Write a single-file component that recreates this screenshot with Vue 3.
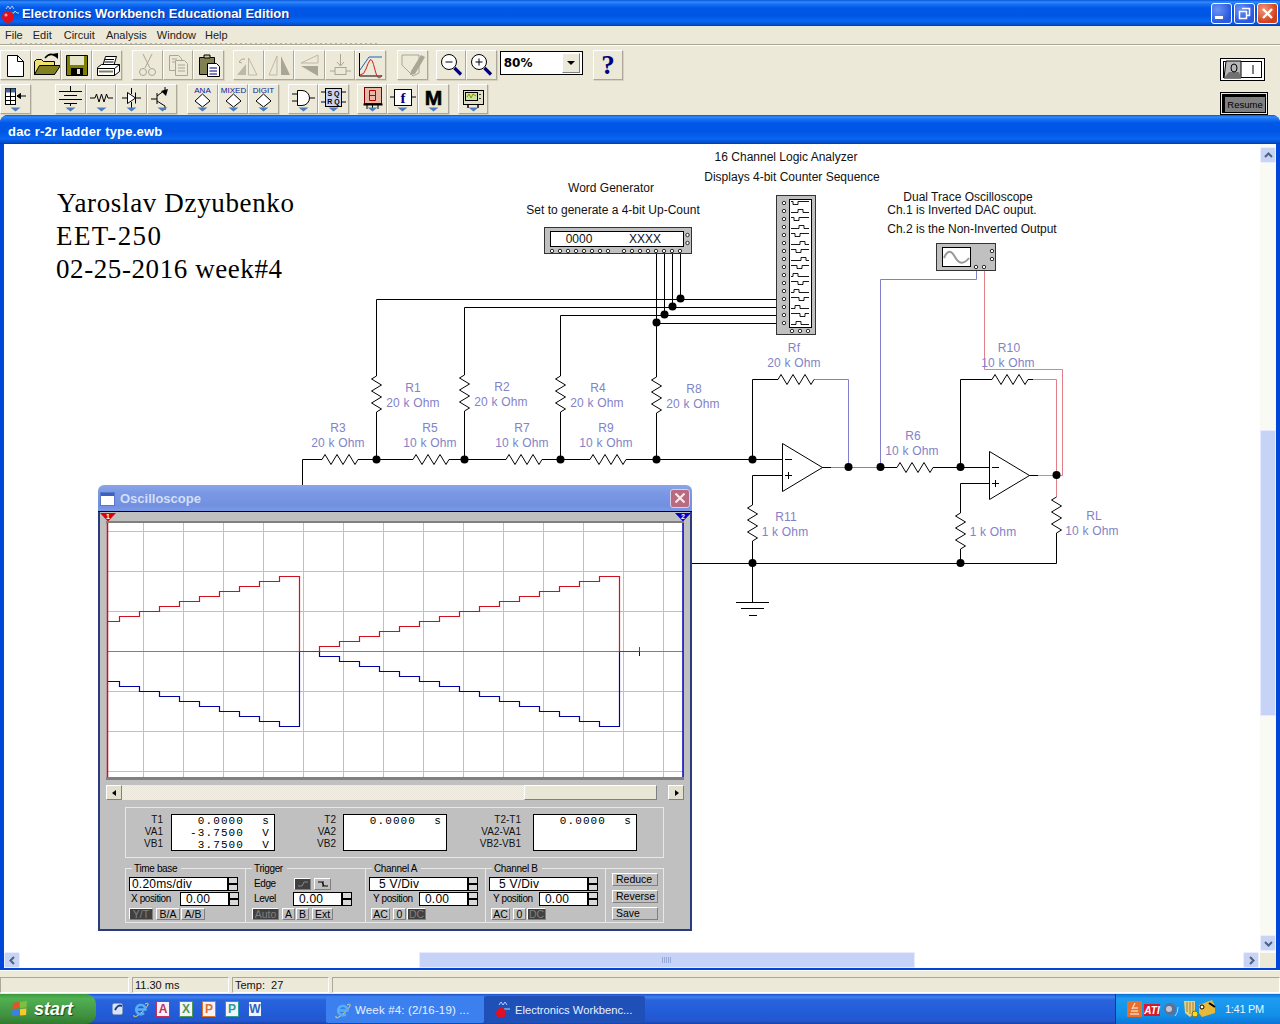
<script setup>
const zig = (x0, y, v = false, n = 36) => {
  const p = [[0, 0], [3, -5], [9, 5], [15, -5], [21, 5], [27, -5], [33, 5], [36, 0]]
  return p.map(([a, b]) => (v ? `${y + b},${x0 + (a * n) / 36}` : `${x0 + (a * n) / 36},${y + b}`)).join(' ')
}
const black = [
  '302.5,486 302.5,459.5 322,459.5', '358,459.5 413,459.5', '449,459.5 506,459.5', '542,459.5 590,459.5', '626,459.5 782,459.5',
  '376.5,376 376.5,299.5 776,299.5', '376.5,412 376.5,459.5', '464.5,375 464.5,307.5 776,307.5', '464.5,411 464.5,459.5',
  '560.5,376 560.5,315.5 776,315.5', '560.5,412 560.5,459.5', '656.5,253 656.5,377', '656.5,413 656.5,459.5', '656.5,323.5 776,323.5',
  '664.5,253 664.5,315', '672.5,253 672.5,307', '680.5,253 680.5,299',
  '752.5,459.5 752.5,379.5 778,379.5', '782,475.5 752.5,475.5 752.5,505', '752.5,541 752.5,602', '822,467.5 831,467.5',
  '880,467.5 897,467.5', '933,467.5 989,467.5', '960.5,467.5 960.5,379.5 992,379.5', '1028,379.5 1033,379.5', '989,483.5 960.5,483.5 960.5,513', '960.5,549 960.5,563.5',
  '1029,475.5 1038,475.5', '692,563.5 1056.5,563.5 1056.5,533', '736,602.5 769,602.5', '741,608.5 764,608.5', '749,615.5 757,615.5',
]
const blue = ['814,379.5 848.5,379.5 848.5,467.5', '831,467.5 880,467.5', '880.5,467.5 880.5,279.5 976.5,279.5 976.5,270']
const red = ['984.5,270 984.5,369.5 1062.5,369.5 1062.5,475.5 1056.5,475.5', '1033,379.5 1056.5,379.5 1056.5,497', '1038,475.5 1056.5,475.5']
const resH = [[322, 459.5], [413, 459.5], [506, 459.5], [590, 459.5], [778, 379.5], [897, 467.5], [992, 379.5]]
const resV = [[376, 376.5], [375, 464.5], [376, 560.5], [377, 656.5], [505, 752.5], [513, 960.5], [497, 1056.5]]
const dots = [[376.5, 459.5], [464.5, 459.5], [560.5, 459.5], [656.5, 459.5], [752.5, 459.5], [680.5, 298.5], [672.5, 306.5], [664.5, 314.5], [656.5, 322.5],
  [848.5, 467], [880.5, 467], [960.5, 467], [1056.5, 475], [752.5, 563], [960.5, 563]]
const purple = [
  ['R1', 413, 392], ['20 k Ohm', 413, 407], ['R2', 502, 391], ['20 k Ohm', 501, 406], ['R4', 598, 392], ['20 k Ohm', 597, 407], ['R8', 694, 393], ['20 k Ohm', 693, 408],
  ['R3', 338, 432], ['20 k Ohm', 338, 447], ['R5', 430, 432], ['10 k Ohm', 430, 447], ['R7', 522, 432], ['10 k Ohm', 522, 447], ['R9', 606, 432], ['10 k Ohm', 606, 447],
  ['Rf', 794, 352], ['20 k Ohm', 794, 367], ['R10', 1009, 352], ['10 k Ohm', 1008, 367], ['R6', 913, 440], ['10 k Ohm', 912, 455],
  ['R11', 786, 521], ['1 k Ohm', 785, 536], ['1 k Ohm', 993, 536], ['RL', 1094, 520], ['10 k Ohm', 1092, 535],
]
const notes = [
  ['16 Channel Logic Analyzer', 786, 161], ['Displays 4-bit Counter Sequence', 792, 181], ['Word Generator', 611, 192], ['Set to generate a 4-bit Up-Count', 613, 214],
  ['Dual Trace Oscilloscope', 968, 201], ['Ch.1 is Inverted DAC ouput.', 962, 214], ['Ch.2 is the Non-Inverted Output', 972, 233],
]
const wgPins = [552, 560, 568, 576, 584, 592, 600, 608, 624, 632, 640, 648, 656, 664, 672, 680]
const laPins = Array.from({ length: 16 }, (_, i) => 203 + i * 8)
const laWave = (y, i) => {
  const a = 793 + ((i * 5) % 9), b = a + 5
  return i % 2 ? `791,${y + 3} ${a},${y + 3} ${a},${y} ${b},${y} ${b},${y + 3} 809,${y + 3}` : `791,${y} ${a},${y} ${a},${y + 3} ${b},${y + 3} ${b},${y} 809,${y}`
}
const scopeX = Array.from({ length: 14 }, (_, i) => 143.5 + i * 40)
const scopeY = [531.5, 571.5, 611.5, 691.5, 731.5, 771.5]
const traces = (() => {
  let r = [[107, 621.5]], y = 621.5, x = 119.5
  for (let i = 0; i < 9; i++) { r.push([x, y]); y -= 5; r.push([x, y]); x += 20 }
  r.push([299.5, y], [299.5, 651.5], [319.5, 651.5])
  y = 651.5; x = 319.5
  for (let i = 0; i < 15; i++) { r.push([x, y]); y -= 5; r.push([x, y]); x += 20 }
  r.push([619.5, y], [619.5, 651.5], [639.5, 651.5])
  return r
})()
const redTrace = traces.map((p) => p.join(',')).join(' ')
const blueTrace = traces.map(([a, b]) => `${a},${1303 - b}`).join(' ')
const row1 = [
  ['new', 'open', 'save', 'print'], ['cut', 'copy', 'paste'], ['rot', 'fliph', 'flipv', 'prop', 'graph'], ['check'], ['zout', 'zin'],
]
const row2 = [['table'], ['batt', 'res', 'diode', 'bjt'], ['ana', 'mixed', 'digit'], ['gate', 'sr'], ['seg', 'func', 'misc'], ['inst']]
const menu = ['File', 'Edit', 'Circuit', 'Analysis', 'Window', 'Help']
const quick = [['A', '#c42f62'], ['X', '#4f9a52'], ['P', '#e0702c'], ['P', '#2f9c9c'], ['W', '#2f62c0']]
const sections = [
  { title: 'Time base', sel: '0.20ms/div', selW: 99, lbl: 'X position', lblW: 51, val: '0.00', pad: 0, btns: [['Y/T', 24, 1], ['B/A', 24, 0], ['A/B', 24, 0]] },
  { title: 'Trigger', edge: true, lbl: 'Level', lblW: 44, val: '0.00', pad: 3, btns: [['Auto', 27, 1], ['A', 13, 0], ['B', 13, 0], ['Ext', 21, 0]] },
  { title: 'Channel A', sel: '  5 V/Div', selW: 99, lbl: 'Y position', lblW: 50, val: '0.00', pad: 2, btns: [['AC', 19, 0], ['0', 13, 0], ['DC', 19, 1]] },
  { title: 'Channel B', sel: '  5 V/Div', selW: 99, lbl: 'Y position', lblW: 50, val: '0.00', pad: 2, btns: [['AC', 19, 0], ['0', 13, 0], ['DC', 19, 1]] },
]
const reads = [
  { w: 37, gap: 8, labels: ['T1', 'VA1', 'VB1'], lines: [['0.0000', 's'], ['-3.7500', 'V'], ['3.7500', 'V']] },
  { w: 61, gap: 7, labels: ['T2', 'VA2', 'VB2'], lines: [['0.0000', 's']] },
  { w: 74, gap: 12, labels: ['T2-T1', 'VA2-VA1', 'VB2-VB1'], lines: [['0.0000', 's']] },
]
</script>

<template>
  <div class="root">
    <svg class="defs">
      <symbol id="new" viewBox="0 0 31 30"><path d="M7.5 5.5H17.5L23.5 11.5V26.5H7.5Z" fill="#fff" stroke="#000"/><path d="M17.5 5.5V11.5H23.5" fill="none" stroke="#000"/></symbol>
      <symbol id="open" viewBox="0 0 31 30"><path d="M3.5 24.5V11.5L5.5 9.5H10.5L12.5 11.5H23.5V24.5Z" fill="#f0e070" stroke="#000"/><path d="M3.5 24.5L8.5 15.5H29.5L23.5 24.5Z" fill="#808020" stroke="#000"/><path d="M14 8Q19 2 24 6" fill="none" stroke="#000" stroke-width="1.5"/><path d="M27 9L27 3L21 4Z" fill="#000"/></symbol>
      <symbol id="save" viewBox="0 0 31 30"><path d="M5.5 5.5H26.5V25.5H5.5Z" fill="#808000" stroke="#000"/><rect x="9" y="6" width="14" height="9" fill="#e4e4c8"/><rect x="10" y="18" width="12" height="7" fill="#000"/><rect x="16" y="19" width="3" height="5" fill="#e4e4c8"/></symbol>
      <symbol id="print" viewBox="0 0 31 30"><path d="M10.5 16.5L13.5 6.5H24.5L21.5 16.5Z" fill="#fff" stroke="#000"/><path d="M13 9.5H22M12.5 12H21.5M12 14.5H21" stroke="#000"/><path d="M5.5 17.5L9.5 14.5H27.5V21.5L22.5 25.5H5.5Z" fill="#fff" stroke="#000"/><path d="M5.5 18.5H22.5L27.5 14.5M22.5 18.5V25.5" fill="none" stroke="#000"/><path d="M7 21.5H21" stroke="#808060" stroke-width="2"/></symbol>
      <symbol id="cut" viewBox="0 0 31 30"><g fill="none" stroke="#a9a694"><path d="M11 4L18 18M20 4L13 18"/><circle cx="11" cy="22" r="3.5"/><circle cx="20" cy="22" r="3.5"/></g></symbol>
      <symbol id="copy" viewBox="0 0 31 30"><g fill="#ece9d8" stroke="#a9a694"><path d="M6.5 5.5H15.5L18.5 8.5V20.5H6.5Z"/><path d="M12.5 10.5H21.5L24.5 13.5V25.5H12.5Z"/><path d="M15 15H22M15 18H22M15 21H22M9 9H14M9 12H12"/></g></symbol>
      <symbol id="paste" viewBox="0 0 31 30"><path d="M6.5 7.5H21.5V24.5H6.5Z" fill="#808050" stroke="#000"/><path d="M11 8V5H17V8Z" fill="#c8c8a8" stroke="#000"/><path d="M14.5 13.5H23.5L26.5 16.5V26.5H14.5Z" fill="#fff" stroke="#000"/><path d="M16.5 18H24M16.5 21H24M16.5 24H24" stroke="#000080"/></symbol>
      <symbol id="rot" viewBox="0 0 31 30"><path d="M4 25L13 14V25Z" fill="#bcb9a8"/><path d="M15.5 8V25H24Z" fill="none" stroke="#bcb9a8"/><path d="M6 12Q8 8 12 9M6 12L9 13" fill="none" stroke="#a9a694"/></symbol>
      <symbol id="fliph" viewBox="0 0 31 30"><path d="M13 6L5 25H13Z" fill="none" stroke="#bcb9a8"/><path d="M17 6L26 25H17Z" fill="#a9a694"/></symbol>
      <symbol id="flipv" viewBox="0 0 31 30"><path d="M24 5L7 13H24Z" fill="none" stroke="#bcb9a8"/><path d="M24 26L7 16H24Z" fill="#a9a694"/></symbol>
      <symbol id="prop" viewBox="0 0 31 30"><g fill="none" stroke="#a9a694"><path d="M15.5 4V16M12 12L15.5 16L19 12M5 21H10M21 21H26"/><rect x="10" y="17.5" width="11" height="7"/></g></symbol>
      <symbol id="graph" viewBox="0 0 31 30"><path d="M4.5 3V26H27" fill="none" stroke="#000"/><path d="M5 20L14 7H27" fill="none" stroke="#2060c0"/><path d="M5 25Q9 25 11 19T15 10T20 20T27 25" fill="none" stroke="#d02020"/></symbol>
      <symbol id="check" viewBox="0 0 31 30"><path d="M5 5H22V23L16 26L5 15Z" fill="none" stroke="#a9a694"/><path d="M14 21L24 5L28 7L18 24L13 25Z" fill="#a9a694"/></symbol>
      <symbol id="zout" viewBox="0 0 31 30"><circle cx="13" cy="12" r="7.5" fill="#fff" stroke="#000"/><path d="M9.5 12H16.5" stroke="#000"/><path d="M18.5 18L25 24.5" stroke="#000080" stroke-width="3.2"/></symbol>
      <symbol id="zin" viewBox="0 0 31 30"><circle cx="13" cy="12" r="7.5" fill="#fff" stroke="#000"/><path d="M9.5 12H16.5M13 8.5V15.5" stroke="#000"/><path d="M18.5 18L25 24.5" stroke="#000080" stroke-width="3.2"/></symbol>
      <symbol id="table" viewBox="0 0 31 30"><rect x="5.5" y="4.5" width="10" height="16" fill="#fff" stroke="#000"/><path d="M5.5 4.5H15.5V8.5H5.5Z" fill="#4060a0"/><path d="M5.5 12.5H15.5M5.5 16.5H15.5M10.5 4.5V20.5" stroke="#000"/><path d="M17 12H26M17 12L20.5 9.5V14.5Z" stroke="#000" fill="#000"/></symbol>
      <symbol id="batt" viewBox="0 0 31 30"><path d="M15.5 2V7M4 7.5H27M9 11.5H22M4 15.5H27M9 19.5H22M15.5 20V22" stroke="#000" fill="none"/></symbol>
      <symbol id="res" viewBox="0 0 31 30"><path d="M4 14H9L10.5 10L13 18L15.5 10L18 18L20.5 10L22 14H27" fill="none" stroke="#000"/></symbol>
      <symbol id="diode" viewBox="0 0 31 30"><path d="M15.5 4V10M15.5 18V24M6 14H12M19 14H25" stroke="#000" fill="none"/><path d="M11.5 8.5V19.5L19.5 14ZM19.5 8.5V19.5" fill="#fff" stroke="#000"/></symbol>
      <symbol id="bjt" viewBox="0 0 31 30"><path d="M10 9V20M4 15H10M10 12L18 6V3M10 17L18 22V26" fill="none" stroke="#000"/><path d="M21 5L14 7L19 12Z" fill="#000"/></symbol>
      <symbol id="ana" viewBox="0 0 31 30"><text x="15.5" y="8.5" class="mini">ANA</text><path d="M15.5 10L23 17L15.5 23L8 17Z" fill="#fff" stroke="#000"/></symbol>
      <symbol id="mixed" viewBox="0 0 31 30"><text x="15.5" y="8.5" class="mini">MIXED</text><path d="M15.5 10L23 17L15.5 23L8 17Z" fill="#fff" stroke="#000"/></symbol>
      <symbol id="digit" viewBox="0 0 31 30"><text x="15.5" y="8.5" class="mini">DIGIT</text><path d="M15.5 10L23 17L15.5 23L8 17Z" fill="#fff" stroke="#000"/></symbol>
      <symbol id="gate" viewBox="0 0 31 30"><path d="M4 10H9M4 17H9M21 14H27" stroke="#000"/><path d="M9.5 6.5H14A7.5 7.5 0 0 1 14 21.5H9.5Z" fill="#fff" stroke="#000"/></symbol>
      <symbol id="sr" viewBox="0 0 31 30"><rect x="7.5" y="4.5" width="16" height="18" fill="#c8d4f0" stroke="#000"/><text x="15.5" y="12" class="sq">S Q</text><text x="15.5" y="20" class="sq">R Q</text><path d="M3 8H7M3 18H7M24 8H28M24 18H28" stroke="#000"/></symbol>
      <symbol id="seg" viewBox="0 0 31 30"><rect x="7.5" y="3.5" width="17" height="16" fill="#e8b8a8" stroke="#800000"/><rect x="6.5" y="19.5" width="19" height="2" fill="#000"/><path d="M12.5 6.5H18.5V16.5H12.5ZM12.5 11.5H18.5" fill="none" stroke="#b00000"/><path d="M10 21V25M15.5 21V25M21 21V25" stroke="#000"/></symbol>
      <symbol id="func" viewBox="0 0 31 30"><rect x="7.5" y="5.5" width="17" height="16" fill="#fff" stroke="#000"/><path d="M3 13H7M25 13H29" stroke="#000"/><text x="16" y="19" class="ff">f</text></symbol>
      <symbol id="misc" viewBox="0 0 31 30"><text x="15.5" y="21" class="mm">M</text></symbol>
      <symbol id="inst" viewBox="0 0 31 30"><rect x="5.5" y="6.5" width="20" height="14" fill="#e0e0c8" stroke="#000"/><rect x="7.5" y="8.5" width="12" height="8" fill="#c8e8a0" stroke="#000"/><path d="M9 13L11 10L13 14L15 10L18 12" fill="none" stroke="#a08000"/><path d="M22 10V11M22 14V15M10 20V24M20 20V24" stroke="#000" stroke-width="1.5"/></symbol>
      <symbol id="ielogo" viewBox="0 0 18 18"><path d="M2 15Q1 18 5 16Q13 11 16 5Q17 2 13 4" fill="none" stroke="#e8d070"/><path d="M4.5 9.5H13.5A4.7 4.7 0 1 0 12 13" fill="none" stroke="#58b0f4" stroke-width="2.4"/></symbol>
    </svg>

    <header class="xp-title main-title">
      <svg class="app-ico" width="18" height="20" viewBox="0 0 18 20"><path d="M5 5L7 2L9 5L11 2L13 5" fill="none" stroke="#b8c8ff"/><path d="M10 9H13L14 7L16 9H18" fill="none" stroke="#9fe0ff"/><circle cx="7" cy="13" r="6" fill="#e01020"/><circle cx="5" cy="11" r="1.5" fill="#ff9a9a"/></svg>
      <span class="mt-text">Electronics Workbench Educational Edition</span>
      <div class="wbtns">
        <span class="wb blue"><i class="min-i"></i></span>
        <span class="wb blue"><svg width="13" height="13" viewBox="0 0 13 13"><path d="M4 1.5H11.5V8.5H9M1.5 4.5H8.5V11.5H1.5Z" fill="none" stroke="#fff" stroke-width="1.5"/></svg></span>
        <span class="wb redb"><svg width="13" height="13" viewBox="0 0 13 13"><path d="M2 2L11 11M11 2L2 11" stroke="#fff" stroke-width="2.4"/></svg></span>
      </div>
    </header>

    <nav class="menubar"><span v-for="m in menu" :key="m">{{ m }}</span></nav>

    <section class="toolbars">
      <div class="tbcols">
        <div class="tbrow r1">
          <div v-for="(g, i) in row1" :key="i" class="tbgroup">
            <button v-for="b in g" :key="b" class="tb"><svg width="31" height="30"><use :href="'#' + b" /></svg></button>
          </div>
          <div class="combo"><span class="combo-v">80%</span><span class="combo-a"><i></i></span></div>
          <button class="tb help">?</button>
        </div>
        <div class="tbrow r2">
          <div v-for="(g, i) in row2" :key="i" class="tbgroup">
            <button v-for="b in g" :key="b" class="tb">
              <svg width="31" height="30"><use :href="'#' + b" /><path d="M10.5 23.5H20.5L15.5 27.5Z" fill="#4a7cc4" /></svg>
            </button>
          </div>
        </div>
      </div>
      <div class="rightctl">
        <div class="power">
          <svg width="45" height="23" viewBox="0 0 45 23"><rect x=".5" y=".5" width="44" height="22" fill="#fff" stroke="#000"/><rect x="3.5" y="3.5" width="38" height="16" fill="#fff" stroke="#000"/><path d="M4 20L6 3H21V20Z" fill="#b8b8b8" stroke="#000"/><path d="M4 20L9 14H19L21 20Z" fill="#707070"/><ellipse cx="14" cy="10" rx="3" ry="4" fill="none" stroke="#000"/><path d="M33 7V16" stroke="#000"/></svg>
        </div>
        <div class="resume"><span>Resume</span></div>
      </div>
    </section>

    <section class="mdi">
      <div class="xp-title mdi-title">dac r-2r ladder type.ewb</div>
      <div class="mdi-body">
        <div class="canvas-col">
          <div class="canvas">
            <svg width="1256" height="808" viewBox="4 144 1256 808" class="circuit">
              <text x="57" y="212" class="big" textLength="237">Yaroslav Dzyubenko</text>
              <text x="56" y="245" class="big" textLength="105">EET-250</text>
              <text x="56" y="278" class="big" textLength="226">02-25-2016 week#4</text>
              <text v-for="n in notes" :key="n[0]" :x="n[1]" :y="n[2]" class="note">{{ n[0] }}</text>

              <g class="wires">
                <polyline v-for="w in black" :key="w" :points="w" stroke="#000" />
                <polyline v-for="w in blue" :key="w" :points="w" stroke="#8080cc" />
                <polyline v-for="w in red" :key="w" :points="w" stroke="#e08088" />
              </g>
              <g fill="none" stroke="#000">
                <polyline v-for="r in resH" :key="r[0]" :points="zig(r[0], r[1])" />
                <polyline v-for="r in resV" :key="r[0]" :points="zig(r[0], r[1], true)" />
                <path d="M782.5 443.5V491.5L822.5 467.5ZM785 459.5H792M785 475.5H792M788.5 472V479" fill="#fff" />
                <path d="M989.5 451.5V499.5L1029.5 475.5ZM992 467.5H999M992 483.5H999M995.5 480V487" fill="#fff" />
              </g>
              <circle v-for="d in dots" :key="d.join()" :cx="d[0]" :cy="d[1]" r="4" fill="#000" />
              <text v-for="(t, i) in purple" :key="i" :x="t[1]" :y="t[2]" class="part">{{ t[0] }}</text>

              <g class="inst">
                <rect x="544.5" y="227.5" width="147" height="26" fill="#c0c0c0" stroke="#333" />
                <rect x="550.5" y="231.5" width="133" height="15" fill="#fff" stroke="#000" />
                <text x="579" y="243" class="note">0000</text>
                <text x="645" y="243" class="note">XXXX</text>
                <circle v-for="p in wgPins" :key="p" :cx="p" cy="251" r="1.7" fill="#fff" stroke="#000" stroke-width=".8" />
                <circle cx="687.5" cy="235" r="1.7" fill="#fff" stroke="#000" stroke-width=".8" />
                <circle cx="687.5" cy="243" r="1.7" fill="#fff" stroke="#000" stroke-width=".8" />

                <rect x="776.5" y="195.5" width="39" height="139" fill="#c0c0c0" stroke="#333" />
                <rect x="789.5" y="199.5" width="22" height="128" fill="#fff" stroke="#000" />
                <circle v-for="p in laPins" :key="p" cx="784" :cy="p" r="1.7" fill="#fff" stroke="#000" stroke-width=".8" />
                <polyline v-for="(p, i) in laPins" :key="'w' + p" :points="laWave(p - 1.5, i)" fill="none" stroke="#000" stroke-width=".9" />
                <circle v-for="p in [792, 800, 808]" :key="'b' + p" :cx="p" cy="331" r="1.7" fill="#fff" stroke="#000" stroke-width=".8" />

                <rect x="936.5" y="243.5" width="59" height="27" fill="#c0c0c0" stroke="#333" />
                <rect x="942.5" y="247.5" width="28" height="19" fill="#fff" stroke="#000" />
                <path d="M944 258Q949 246 955 257T969 258" fill="none" stroke="#999" stroke-width="2" />
                <circle v-for="c in [[976, 267], [984, 267], [992, 251], [992, 259]]" :key="c.join()" :cx="c[0]" :cy="c[1]" r="1.7" fill="#fff" stroke="#000" stroke-width=".8" />
              </g>
            </svg>
          </div>
          <div class="hscroll">
            <span class="sb"><svg width="9" height="9" viewBox="0 0 9 9"><path d="M6 1L2.5 4.5L6 8" fill="none" stroke="#4d6185" stroke-width="2"/></svg></span>
            <span class="hthumb"><i class="grip"></i></span>
            <span class="sb"><svg width="9" height="9" viewBox="0 0 9 9"><path d="M3 1L6.5 4.5L3 8" fill="none" stroke="#4d6185" stroke-width="2"/></svg></span>
          </div>
        </div>
        <div class="vscroll">
          <span class="sb up"><svg width="9" height="9" viewBox="0 0 9 9"><path d="M1 6L4.5 2.5L8 6" fill="none" stroke="#4d6185" stroke-width="2"/></svg></span>
          <span class="vthumb"></span>
          <span class="sb down"><svg width="9" height="9" viewBox="0 0 9 9"><path d="M1 3L4.5 6.5L8 3" fill="none" stroke="#4d6185" stroke-width="2"/></svg></span>
          <span class="corner"></span>
        </div>
      </div>
    </section>

    <footer class="status">
      <span class="cell c1"></span><span class="cell c2">11.30 ms</span><span class="cell c3">Temp:&nbsp; 27</span><span class="cell c4"></span>
    </footer>

    <footer class="taskbar">
      <div class="startbtn">
        <svg width="18" height="18" viewBox="0 0 18 18"><path d="M2 3L8 2V8L1.5 9Z" fill="#e8502a"/><path d="M9 2L16 1L15.5 7.5L9 8Z" fill="#7cc040"/><path d="M1.5 10L8 9V15L1 16Z" fill="#3a80e8"/><path d="M9 9L15.5 8.5L15 15L9 15.5Z" fill="#f8c828"/></svg>
        <span>start</span>
      </div>
      <div class="quick">
        <svg width="16" height="16" viewBox="0 0 16 16"><rect x="2" y="2" width="11" height="12" rx="2" fill="#d8e4f8" stroke="#3a5aa8"/><path d="M5 9Q8 3 12 5" fill="none" stroke="#203a88" stroke-width="2"/></svg>
        <svg width="18" height="18"><use href="#ielogo" /></svg>
        <span v-for="(q, i) in quick" :key="i" class="qi" :style="{ color: q[1], borderColor: q[1] }">{{ q[0] }}</span>
      </div>
      <div class="task t1"><svg width="18" height="18"><use href="#ielogo" /></svg><span>Week #4: (2/16-19) ...</span></div>
      <div class="task t2"><svg width="18" height="18" viewBox="0 0 18 18"><path d="M5 4L7 1L9 4L11 1L13 4" fill="none" stroke="#b8c8ff"/><path d="M10 8H16" stroke="#9fe0ff"/><circle cx="7" cy="12" r="5" fill="#e01020"/></svg><span>Electronics Workbenc...</span></div>
      <div class="tray">
        <svg width="92" height="20" viewBox="0 0 92 20">
          <rect x="1" y="2" width="15" height="16" rx="1" fill="#e8702a"/><path d="M4 15H13M5 12H12M9 4L6 10M7 9L12 9" stroke="#fff"/>
          <rect x="18" y="5" width="16" height="12" fill="#d81828"/><text x="26" y="15" class="ati">ATI</text>
          <circle cx="44" cy="10" r="6" fill="#607090"/><circle cx="43" cy="10" r="3" fill="#c0c8d8"/><path d="M49 17Q52 14 52 8" fill="none" stroke="#b8d0f8"/>
          <path d="M58 2H69V13L64 18L59 14Z" fill="#e8d080"/><path d="M61 3V13M64 3V15M67 3V13" stroke="#a08030"/><circle cx="69" cy="15" r="3" fill="#f0e020" stroke="#807010"/>
          <path d="M73 6L86 1L89 7V14L76 18L73 14Z" fill="#e8b838"/><circle cx="76" cy="8" r="2" fill="#fff" stroke="#000"/><path d="M83 4L89 8" stroke="#000" stroke-width="2"/>
        </svg>
        <span class="clock">1:41 PM</span>
      </div>
    </footer>

    <!-- floating instrument window -->
    <section class="scope">
      <div class="s-title">
        <svg width="15" height="15" viewBox="0 0 15 15"><rect x=".5" y="1.5" width="14" height="13" fill="#fff" stroke="#5a78c8"/><rect x="1" y="2" width="13" height="3" fill="#3a60c8"/></svg>
        <span>Oscilloscope</span>
        <em class="s-close"><svg width="12" height="12" viewBox="0 0 12 12"><path d="M1.5 1.5L10.5 10.5M10.5 1.5L1.5 10.5" stroke="#f8e8e8" stroke-width="2.2"/></svg></em>
      </div>
      <div class="s-body">
        <svg class="s-screen" width="590" height="268" viewBox="100 512 590 268">
          <rect x="106" y="521" width="578" height="2.5" fill="#808080" />
          <rect x="106" y="777" width="578" height="3" fill="#808080" />
          <rect x="107" y="523" width="576" height="254" fill="#fff" />
          <path v-for="x in scopeX" :key="x" :d="`M${x} 523V777`" stroke="#c0c0c0" />
          <path v-for="y in scopeY" :key="y" :d="`M107 ${y}H683`" stroke="#c0c0c0" />
          <path d="M107 651.5H683" stroke="#808080" />
          <polyline :points="blueTrace" fill="none" stroke="#0000a8" stroke-width="1.2" />
          <polyline :points="redTrace" fill="none" stroke="#d0101c" stroke-width="1.2" />
          <path d="M639.5 647V652" stroke="#d0101c" /><path d="M639.5 652V656" stroke="#0000a8" />
          <path d="M107.5 523V777" stroke="#c8101c" stroke-width="1.5" /><path d="M683 523V777" stroke="#0000b0" stroke-width="1.5" />
          <path d="M100 513H116L108 521.5Z" fill="#e00000" /><path d="M675 513H691L683 521.5Z" fill="#0000c8" />
          <text x="108" y="519" class="tn">1</text><text x="683" y="519" class="tn">2</text>
        </svg>
        <div class="s-scroll">
          <span class="ssb"><i class="al"></i></span>
          <span class="strack"><i class="sthumb"></i></span>
          <span class="ssb rb"><i class="ar"></i></span>
        </div>
        <div class="readout">
          <div v-for="(r, i) in reads" :key="i" class="rgroup">
            <div class="rl" :style="{ width: r.w + 'px', marginRight: r.gap + 'px' }"><span v-for="l in r.labels" :key="l">{{ l }}</span></div>
            <div class="rd"><div v-for="(ln, j) in r.lines" :key="j" class="rline"><span>{{ ln[0] }}</span><span class="unit">{{ ln[1] }}</span></div></div>
          </div>
        </div>
        <div class="controls">
          <div v-for="s in sections" :key="s.title" class="sec">
            <span class="legend">{{ s.title }}</span>
            <div class="crow">
              <template v-if="s.edge">
                <span class="clbl edge-l">Edge</span>
                <span class="tiny dark eb"><svg width="10" height="8" viewBox="0 0 10 8"><path d="M0 6H4L6 2H10" fill="none" stroke="#888"/></svg></span>
                <span class="tiny eb2"><svg width="10" height="8" viewBox="0 0 10 8"><path d="M0 2H4L6 6H10M5 1V7" fill="none" stroke="#000"/></svg></span>
              </template>
              <template v-else>
                <span class="field" :style="{ width: s.selW + 'px' }">{{ s.sel }}</span><span class="spin"><i></i><i></i></span>
              </template>
            </div>
            <div class="crow">
              <span class="clbl" :style="{ width: s.lblW + 'px', paddingLeft: (s.pad * 1 + 2) + 'px' }">{{ s.lbl }}</span>
              <span class="field num">{{ s.val }}</span><span class="spin"><i></i><i></i></span>
            </div>
            <div class="crow btns" :style="{ paddingLeft: s.pad + 'px' }">
              <span v-for="b in s.btns" :key="b[0]" class="tiny" :class="{ dark: b[2] }" :style="{ width: b[1] + 'px' }">{{ b[0] }}</span>
            </div>
          </div>
          <div class="sec last">
            <span class="tb2">Reduce</span><span class="tb2">Reverse</span><span class="tb2">Save</span>
          </div>
        </div>
      </div>
    </section>
  </div>
</template>

<style>
html, body { margin: 0; padding: 0; background: #ece9d8; }
</style>

<style scoped>
.root { position: relative; width: 1280px; height: 1024px; overflow: hidden; background: #ece9d8; display: flex; flex-direction: column; font-family: "Liberation Sans", Arial, sans-serif; font-size: 11px; color: #000; }
.defs { display: none; }
.xp-title { background: linear-gradient(180deg, #0a55d8 0, #2e8cfb 2px, #1a72f4 4px, #0058e8 8px, #0056e4 60%, #0a66f0 82%, #0450d0 94%, #003cb0 100%); color: #fff; font-weight: bold; font-size: 13px; }
.main-title { height: 26px; flex: none; display: flex; align-items: center; padding-left: 1px; box-sizing: border-box; }
.app-ico { flex: none; margin: 2px 3px 0 0; }
.mt-text { letter-spacing: -.05px; text-shadow: 1px 1px 0 #0a2a90; }
.wbtns { margin-left: auto; display: flex; gap: 2px; padding-right: 2px; }
.wb { width: 21px; height: 21px; box-sizing: border-box; border: 1px solid #fff; border-radius: 3px; display: flex; align-items: center; justify-content: center; }
.wb.blue { background: radial-gradient(circle at 30% 30%, #6a94f4, #2a58e0 70%); }
.wb.redb { background: radial-gradient(circle at 30% 30%, #f09878, #d0401c 70%); }
.min-i { width: 8px; height: 3px; background: #fff; margin: 9px 6px 0 0; }
.menubar { height: 19px; flex: none; display: flex; box-sizing: border-box; padding: 3px 0 0 5px; border-bottom: 1px solid #aca899; font-size: 11px; color: #222; background: repeating-linear-gradient(90deg, #b8b5a4 0 2px, transparent 2px 5px) 10px 17px / 370px 1px no-repeat; }
.menubar span:nth-child(1) { margin-right: 10px; }
.menubar span:nth-child(2) { margin-right: 12px; }
.menubar span:nth-child(3) { margin-right: 11px; }
.menubar span:nth-child(4) { margin-right: 10px; }
.menubar span:nth-child(5) { margin-right: 9px; }
.toolbars { height: 70px; flex: none; box-sizing: border-box; border-top: 1px solid #fff; display: flex; justify-content: space-between; padding-top: 4px; }
.tbrow { display: flex; height: 30px; }
.r2 { margin-top: 4px; }
.tbgroup { display: flex; }
.tb { width: 30.6px; height: 30px; padding: 0; margin: 0; box-sizing: border-box; background: #ece9d8; border: 1px solid; border-color: #fff #aca899 #aca899 #fff; box-shadow: 1px 1px 0 #d6d2bf; display: block; overflow: hidden; }
.tb svg { display: block; margin: -1px; }
.r1 .tbgroup:nth-child(2) { margin-left: 9.6px; }
.r1 .tbgroup:nth-child(3) { margin-left: 9.2px; }
.r1 .tbgroup:nth-child(4) { margin-left: 11px; }
.r1 .tbgroup:nth-child(5) { margin-left: 8px; }
.r2 .tbgroup:nth-child(2) { margin-left: 24.4px; }
.r2 .tbgroup:nth-child(3) { margin-left: 9.6px; }
.r2 .tbgroup:nth-child(4) { margin-left: 8.8px; }
.r2 .tbgroup:nth-child(5) { margin-left: 8px; }
.r2 .tbgroup:nth-child(6) { margin-left: 9px; }
.combo { width: 83px; height: 24px; margin: 1px 0 0 3px; box-sizing: border-box; border: 1px solid #000; background: #fff; display: flex; align-items: center; justify-content: space-between; padding: 0 2px 0 3px; }
.combo-v { font-weight: bold; font-family: "DejaVu Sans", sans-serif; font-size: 12px; }
.combo-a { width: 16px; height: 18px; background: #ece9d8; border: 1px solid; border-color: #fff #808080 #808080 #fff; display: flex; align-items: center; justify-content: center; }
.combo-a i { border: 4px solid transparent; border-top: 4px solid #000; margin-top: 4px; }
.help { margin-left: 10px; font: bold 27px/28px "Liberation Serif", serif; color: #000080; }
.rightctl { width: 60px; flex: none; padding-top: 8px; box-sizing: border-box; }
.power { height: 23px; line-height: 0; }
.resume { width: 48px; height: 23px; margin-top: 11px; box-sizing: border-box; border: 1px solid #000; background: #e8e8e8; padding: 1px; }
.resume span { display: block; height: 19px; box-sizing: border-box; background: #808080; border: 1px solid #000; border-width: 3px 1px 1px 3px; font-size: 9.5px; line-height: 15px; text-align: center; color: #000; }
.mdi { height: 855px; flex: none; margin-top: 0; background: #0046d8; border-radius: 8px 8px 0 0; display: flex; flex-direction: column; box-sizing: border-box; padding: 0 4px 2px; }
.mdi-title { height: 29px; margin: 0 -4px; padding: 9px 0 0 8px; box-sizing: border-box; border-radius: 8px 8px 0 0; letter-spacing: .2px; }
.mdi-body { flex: 1; display: flex; min-height: 0; background: #fff; }
.canvas-col { width: 1256px; display: flex; flex-direction: column; }
.canvas { height: 808px; overflow: hidden; background: #fff; }
.circuit { display: block; }
.big { font: 27px "Liberation Serif", serif; fill: #000; }
.note { font: 12px "Liberation Sans", sans-serif; fill: #111; text-anchor: middle; }
.part { font: 12px "Liberation Sans", sans-serif; fill: #8282c8; text-anchor: middle; letter-spacing: .2px; }
.wires polyline { fill: none; }
.hscroll { height: 16px; display: flex; background: #fff; }
.sb { width: 16px; height: 16px; flex: none; box-sizing: border-box; border: 1px solid #e8eeff; background: #c8d4f4; border-radius: 2px; display: flex; align-items: center; justify-content: center; }
.hthumb { margin-left: 399px; width: 496px; background: #c6d3f7; display: flex; align-items: center; justify-content: center; margin-right: 328px; border: 1px solid #e6ecfd; box-sizing: border-box; }
.grip { width: 10px; height: 6px; background: repeating-linear-gradient(90deg, #96a8d8 0 1px, transparent 1px 2px); }
.vscroll { width: 16px; flex: none; display: flex; flex-direction: column; background: #fafaf5; }
.sb.up { margin-top: 3px; }
.vthumb { height: 286px; margin-top: 267px; background: #c6d3f7; border: 1px solid #e6ecfd; box-sizing: border-box; }
.sb.down { margin-top: 219px; }
.corner { flex: 1; background: #ece9d8; margin-top: 2px; }
.status { height: 24px; flex: none; box-sizing: border-box; padding-top: 6px; display: flex; background: #ece9d8; border-top: 1px solid #fff; font-size: 11px; color: #111; }
.cell { height: 16px; box-sizing: border-box; border: 1px solid; border-color: #aca899 #fff #fff #aca899; padding-left: 2px; line-height: 15px; margin-right: 3px; }
.c1 { width: 129px; } .c2 { width: 97px; } .c3 { width: 97px; } .c4 { flex: 1; margin: 0; }
.taskbar { height: 30px; flex: none; display: flex; align-items: stretch; background: linear-gradient(180deg, #1f52c8 0, #3f82f0 3px, #2a64dc 6px, #245edb 50%, #2257cf 90%, #1941a5 100%); }
.startbtn { width: 96px; flex: none; background: linear-gradient(180deg, #3a9a3a 0, #52b052 15%, #3f8f3f 75%, #2f7a2f 100%); border-radius: 0 10px 10px 0; display: flex; align-items: center; padding-left: 11px; box-sizing: border-box; gap: 5px; color: #fff; font: italic bold 18px "Liberation Sans", sans-serif; text-shadow: 1px 1px 1px #1a4a1a; }
.quick { width: 230px; flex: none; display: flex; align-items: center; padding-left: 14px; box-sizing: border-box; gap: 6px; }
.qi { width: 14px; height: 16px; box-sizing: border-box; border: 1px solid; background: #f4f4f8; font: bold 12px/14px "Liberation Sans", sans-serif; text-align: center; margin-right: 3px; }
.task { width: 158px; flex: none; box-sizing: border-box; margin: 2px 0 1px; display: flex; align-items: center; gap: 3px; padding-left: 8px; color: #e8f0ff; font-size: 11.5px; letter-spacing: .15px; border-radius: 2px; white-space: nowrap; }
.t1 { background: #3c80f0; }
.t2 { width: 161px; background: #1e50b8; padding-left: 10px; font-size: 11.2px; letter-spacing: 0; }
.tray { margin-left: auto; width: 165px; flex: none; background: linear-gradient(180deg, #0c70d8 0, #1e9cf0 15%, #1290e8 70%, #0c74d8 100%); border-left: 1px solid #0a3a98; display: flex; align-items: center; box-sizing: border-box; padding-left: 10px; }
.ati { font: italic bold 10px "Liberation Sans", sans-serif; fill: #fff; text-anchor: middle; }
.clock { margin-left: 7px; color: #e8f4ff; font-size: 11px; letter-spacing: -.3px; white-space: nowrap; }

.scope { position: absolute; left: 98px; top: 485px; width: 594px; height: 446px; display: flex; flex-direction: column; }
.s-title { height: 27px; box-sizing: border-box; flex: none; border-radius: 6px 6px 0 0; background: linear-gradient(180deg, #8aa6e8 0, #7a98e4 30%, #7290e0 80%, #7a9ae8 100%); border-bottom: 1px solid #000; display: flex; align-items: center; padding-left: 2px; color: #d4def8; font: bold 13px "Liberation Sans", sans-serif; gap: 5px; }
.s-close { margin-left: auto; margin-right: 2px; width: 20px; height: 19px; box-sizing: border-box; border: 1px solid #d8d0e8; border-radius: 3px; background: #b86a80; display: flex; align-items: center; justify-content: center; }
.s-body { flex: 1; box-sizing: border-box; background: #c0c0c0; border: solid #2c3a80; border-width: 0 2px 2px; display: flex; flex-direction: column; }
.s-screen { display: block; flex: none; }
.tn { font: bold 7px "Liberation Sans", sans-serif; fill: #fff; text-anchor: middle; }
.s-scroll { height: 15px; margin: 5px 6px 0 6px; display: flex; flex: none; }
.ssb { width: 16px; flex: none; box-sizing: border-box; background: #e4e0d0; border: 1px solid; border-color: #fff #808080 #808080 #fff; display: flex; align-items: center; justify-content: center; }
.ssb.rb { margin-left: 11px; }
.al { border: 3px solid transparent; border-right: 4px solid #000; margin-left: -4px; }
.ar { border: 3px solid transparent; border-left: 4px solid #000; margin-right: -4px; }
.strack { flex: 1; display: flex; justify-content: flex-end; background: repeating-conic-gradient(#e8e4d8 0 25%, #f4f2e8 0 50%) 0 0/2px 2px; }
.sthumb { width: 133px; background: #e8e6d4; border-right: 1px solid #808080; border-bottom: 1px solid #808080; border-top: 1px solid #fff; border-left: 1px solid #fff; box-sizing: border-box; }
.readout { height: 51px; width: 539px; margin: 7px 0 0 25px; flex: none; box-sizing: border-box; border: 1px solid #e8e8e8; padding: 6px 0 0 0; display: flex; }
.rgroup { display: flex; }
.rl { display: flex; flex-direction: column; align-items: flex-end; font-size: 10px; line-height: 12px; color: #111; }
.rd { width: 104px; height: 37px; box-sizing: border-box; background: #fff; border: 1px solid #000; font: 11px/12px "Liberation Mono", monospace; letter-spacing: 1.1px; padding-right: 4px; }
.rline { display: flex; justify-content: flex-end; }
.unit { width: 26px; text-align: right; }
.controls { height: 55px; width: 539px; margin: 10px 0 0 25px; flex: none; display: flex; box-sizing: border-box; border: 1px solid #e8e8e8; }
.sec { position: relative; width: 120px; flex: none; box-sizing: border-box; border-right: 1px solid #e8e8e8; padding: 7px 0 0 3px; }
.sec.last { width: 58px; border: 0; padding: 4px 0 0 6px; display: flex; flex-direction: column; gap: 4px; }
.legend { position: absolute; left: 6px; top: -6px; padding: 0 4px 0 2px; background: #c0c0c0; font-size: 10px; line-height: 12px; letter-spacing: -.35px; white-space: nowrap; }
.crow { display: flex; align-items: center; height: 15px; }
.btns { gap: 3px; }
.btns .tiny:nth-child(2) { margin-right: -2px; }
.field { height: 14px; box-sizing: border-box; background: #fff; border: 1px solid #000; padding-left: 2px; font-size: 12px; line-height: 12px; white-space: pre; letter-spacing: .2px; }
.num { width: 49px; padding-left: 5px; }
.spin { width: 10px; height: 14px; margin-left: 0; display: flex; flex-direction: column; }
.spin i { flex: 1; background: #d8d8d8; border: 1px solid #000; }
.clbl { font-size: 10px; letter-spacing: -.4px; padding-left: 2px; box-sizing: border-box; white-space: nowrap; }
.edge-l { padding-left: 5px; width: 45px; flex: none; }
.tiny { height: 12px; box-sizing: border-box; background: #c0c0c0; border: 1px solid; border-color: #fff #808080 #808080 #fff; font-size: 10.5px; line-height: 10px; text-align: center; display: inline-flex; align-items: center; justify-content: center; white-space: nowrap; overflow: hidden; }
.tiny.dark { background: #404040; color: #808080; }
.eb, .eb2 { width: 17px; margin-right: 3px; }
.tb2 { width: 46px; height: 13px; box-sizing: border-box; border: 1px solid; border-color: #fff #808080 #808080 #fff; font-size: 10.5px; line-height: 11px; padding-left: 3px; }
</style>

<style>
.mini { font: 8px "Liberation Sans", sans-serif; fill: #0a1a9a; text-anchor: middle; }
.sq { font: bold 7px "Liberation Sans", sans-serif; fill: #000; text-anchor: middle; }
.ff { font: bold 15px "Liberation Serif", serif; fill: #000080; text-anchor: middle; }
.mm { font: 900 21px "Liberation Sans", sans-serif; fill: #000; text-anchor: middle; stroke: #000; stroke-width: .6px; }
</style>
